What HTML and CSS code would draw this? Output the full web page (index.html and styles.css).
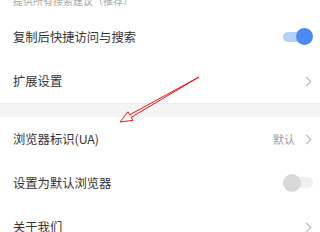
FILE: index.html
```html
<!DOCTYPE html>
<html lang="zh">
<head>
<meta charset="utf-8">
<link rel="stylesheet" href="styles.css">
</head>
<body>
<div class="page">
  <div class="sub-top">提供所有搜索建议（推荐）</div>
  <div class="row">
    <span class="label">复制后快捷访问与搜索</span>
    <span class="toggle on"><span class="track"></span><span class="knob"></span></span>
  </div>
  <div class="row">
    <span class="label">扩展设置</span>
    <span class="chev"></span>
  </div>
  <div class="band"></div>
  <div class="row">
    <span class="label">浏览器标识(UA)</span>
    <span class="right"><span class="value">默认</span><span class="chev"></span></span>
  </div>
  <div class="row">
    <span class="label">设置为默认浏览器</span>
    <span class="toggle off"><span class="track"></span><span class="knob"></span></span>
  </div>
  <div class="row">
    <span class="label">关于我们</span>
    <span class="chev"></span>
  </div>
  <svg class="arrow" width="320" height="232" viewBox="0 0 320 232">
    <polygon points="199,77 129.7,114.8 127.9,111.8 120,122 132.9,120.4 131.1,117.4" fill="none" stroke="#f01010" stroke-width="1" stroke-linejoin="miter"/>
  </svg>
</div>
</body>
</html>
```
FILE: styles.css
```css
html, body {
  margin: 0;
  padding: 0;
  background: #ffffff;
}
.page {
  position: relative;
  width: 320px;
  height: 232px;
  overflow: hidden;
  font-family: "Noto Sans CJK SC", "Noto Sans", sans-serif;
  color: #333333;
}
.sub-top {
  box-sizing: border-box;
  height: 22px;
  margin-top: -7px;
  padding: 0 0 8px 13px;
  font-size: 10px;
  line-height: 12px;
  color: #a8a8a8;
  display: flex;
  align-items: flex-end;
}
.row {
  height: 44px;
  display: flex;
  align-items: center;
  justify-content: space-between;
  padding: 0 7px 0 13px;
}
.label {
  font-size: 12.3px;
  line-height: 16px;
}
.right {
  display: flex;
  align-items: center;
  gap: 8px;
}
.value {
  font-size: 11px;
  color: #9a9a9a;
}
.chev {
  display: inline-block;
  width: 6px;
  height: 6px;
  border-top: 1px solid #b0b0b0;
  border-right: 1px solid #b0b0b0;
  transform: rotate(45deg);
  margin-right: 3px;
}
.band {
  height: 14px;
  background: #f4f4f4;
  border-top: 1px solid #ececec;
  box-sizing: border-box;
}
.toggle {
  position: relative;
  width: 30px;
  height: 18px;
}
.toggle .track {
  position: absolute;
  left: 0;
  right: 0;
  top: 4px;
  height: 10px;
  border-radius: 5px;
}
.toggle .knob {
  position: absolute;
  top: 0;
  width: 17px;
  height: 17px;
  border-radius: 50%;
}
.toggle.on .track { background: #b6cff8; right: 6px; }
.toggle.on .knob { background: #4a8af4; right: 0; }
.toggle.off .track { background: #efefef; left: 6px; top: 3px; height: 11px; }
.toggle.off .knob { background: #d8d8d8; left: 0; width: 18px; height: 18px; }
.arrow {
  position: absolute;
  left: 0;
  top: 0;
}
```
